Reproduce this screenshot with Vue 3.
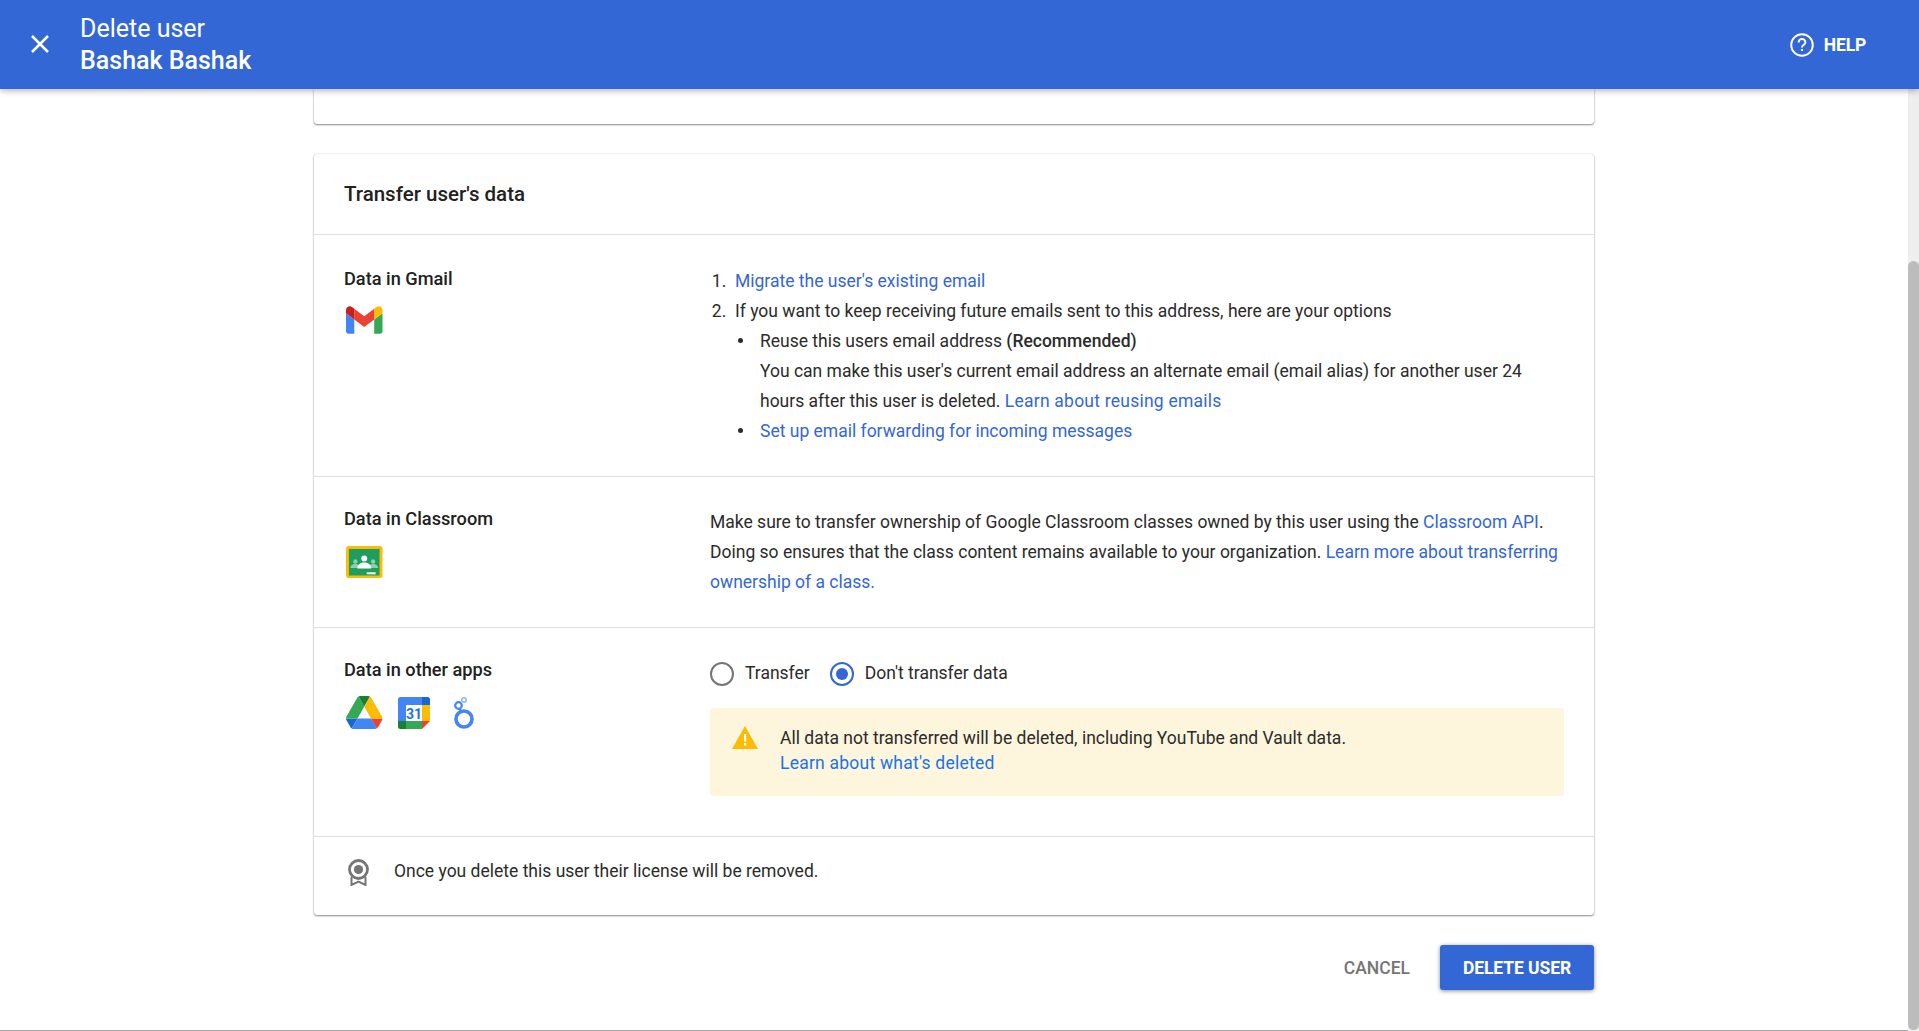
<script setup>
const title = 'Delete user'
const userName = 'Bashak Bashak'
</script>

<template>
  <div class="page">
    <header class="topbar">
      <div class="topbar-left">
        <svg class="close" viewBox="0 0 18 18" width="18" height="18" fill="none" stroke="#fff" stroke-width="2.5">
          <path d="M1 1l16 16M17 1L1 17" />
        </svg>
        <div class="titles">
          <div class="title">{{ title }}</div>
          <div class="title strong">{{ userName }}</div>
        </div>
      </div>
      <div class="help">
        <svg viewBox="0 0 24 24" width="24" height="24" fill="none">
          <circle cx="12" cy="12" r="10.8" stroke="#fff" stroke-width="1.9" />
          <path d="M8.6 9.4a3.4 3.4 0 0 1 6.8 0c0 2.2-3.4 2.5-3.4 5" stroke="#fff" stroke-width="1.9" />
          <rect x="11" y="16" width="2" height="2" fill="#fff" />
        </svg>
        <span>HELP</span>
      </div>
    </header>

    <div class="content">
      <main class="main">
        <div class="card stub"></div>

        <section class="card">
          <h2 class="card-title">Transfer user's data</h2>

          <div class="row gmail-row">
            <div class="label-col">
              <div class="label">Data in Gmail</div>
              <div class="icons">
                <svg class="gmail" viewBox="52 42 88 66" width="36.5" height="28">
                  <path fill="#4285f4" d="M58 108h14V74L52 59v43c0 3.32 2.69 6 6 6" />
                  <path fill="#34a853" d="M120 108h14c3.32 0 6-2.69 6-6V59l-20 15" />
                  <path fill="#fbbc04" d="M120 48v26l20-15v-8c0-7.42-8.47-11.65-14.4-7.2" />
                  <path fill="#ea4335" d="M72 74V48l24 18 24-18v26L96 92" />
                  <path fill="#c5221f" d="M52 51v8l20 15V48l-5.6-4.2c-5.94-4.45-14.4-.22-14.4 7.2" />
                </svg>
              </div>
            </div>
            <div class="body-col">
              <ol class="steps">
                <li><a>Migrate the user's existing email</a></li>
                <li>
                  If you want to keep receiving future emails sent to this address, here are your options
                  <ul class="options">
                    <li>
                      Reuse this users email address <b>(Recommended)</b><br />
                      You can make this user's current email address an alternate email (email alias) for another user 24 hours after this user is deleted.
                      <a class="wide">Learn about reusing emails</a>
                    </li>
                    <li><a>Set up email forwarding for incoming messages</a></li>
                  </ul>
                </li>
              </ol>
            </div>
          </div>

          <div class="row classroom-row">
            <div class="label-col">
              <div class="label">Data in Classroom</div>
              <div class="icons">
                <svg class="classroom" viewBox="0 0 37 32" width="36.5" height="32" preserveAspectRatio="none">
                  <rect width="37" height="32" rx="2.5" fill="#fbbc04" />
                  <rect x="3" y="3" width="31" height="26.500" fill="#1e9e5e" />
                  <circle cx="9.500" cy="15.500" r="2.200" fill="#8fd0ac" />
                  <circle cx="27.500" cy="15.500" r="2.200" fill="#8fd0ac" />
                  <path d="M4.500 22c0-2.800 2.600-4 5-4s5 1.200 5 4zM22.500 22c0-2.800 2.600-4 5-4s5 1.200 5 4z" fill="#8fd0ac" />
                  <circle cx="18.500" cy="12.500" r="3" fill="#fff" />
                  <path d="M11.500 22.500c0-4 3.600-5.900 7-5.900s7 1.900 7 5.900z" fill="#fff" />
                  <rect x="21" y="26.300" width="9" height="2" fill="#fff" />
                </svg>
              </div>
            </div>
            <div class="body-col">
              <p class="para">
                Make sure to transfer ownership of Google Classroom classes owned by this user using the <a>Classroom API</a>.
                Doing so ensures that the class content remains available to your organization.
                <a>Learn more about transferring ownership of a class.</a>
              </p>
            </div>
          </div>

          <div class="row other-row">
            <div class="label-col">
              <div class="label">Data in other apps</div>
              <div class="icons apps">
                <svg viewBox="0 0 87.3 78" width="36.5" height="33" preserveAspectRatio="none">
                  <path d="m6.6 66.85 3.85 6.65c.8 1.4 1.95 2.5 3.3 3.3l13.75-23.8h-27.5c0 1.55.4 3.1 1.2 4.5z" fill="#1967d2" />
                  <path d="m43.65 25-13.75-23.8c-1.35.8-2.5 1.9-3.3 3.3l-25.4 44a9.06 9.06 0 0 0 -1.2 4.5h27.5z" fill="#34a853" />
                  <path d="m73.55 76.8c1.35-.8 2.5-1.9 3.3-3.3l1.6-2.75 7.65-13.25c.8-1.4 1.2-2.95 1.2-4.5h-27.502l5.852 11.5z" fill="#ea4335" />
                  <path d="m43.65 25 13.75-23.8c-1.35-.8-2.9-1.2-4.5-1.2h-18.5c-1.6 0-3.15.45-4.5 1.2z" fill="#188038" />
                  <path d="m59.8 53h-32.3l-13.75 23.8c1.35.8 2.9 1.2 4.5 1.2h50.8c1.6 0 3.15-.45 4.5-1.2z" fill="#4285f4" />
                  <path d="m73.4 26.5-12.7-22c-.8-1.4-1.95-2.5-3.3-3.3l-13.75 23.8 16.15 28h27.45c0-1.55-.4-3.1-1.2-4.5z" fill="#fbbc04" />
                </svg>
                <svg class="calendar" viewBox="0 0 32 32" width="32" height="32">
                  <path d="M2.5 0H24v8H8v16H0V2.500A2.500 2.500 0 0 1 2.500 0z" fill="#4285f4" />
                  <path d="M24 0h5.500A2.500 2.500 0 0 1 32 2.500V8h-8z" fill="#1967d2" />
                  <rect x="24" y="8" width="8" height="16" fill="#fbbc04" />
                  <rect x="8" y="24" width="16" height="8" fill="#34a853" />
                  <path d="M0 24h8v8H2.500A2.500 2.500 0 0 1 0 29.500z" fill="#188038" />
                  <path d="M24 24h8l-8 8z" fill="#ea4335" />
                  <text class="cal-num" x="16" y="21.500" text-anchor="middle">31</text>
                </svg>
                <svg class="looker" viewBox="0 0 20 32" width="20" height="32" fill="none">
                  <circle cx="10" cy="22" r="8" stroke="#4285f4" stroke-width="3.600" />
                  <circle cx="4.500" cy="8.500" r="3.300" stroke="#4285f4" stroke-width="2.200" />
                  <path d="M5.500 11.500L7 14.500" stroke="#4285f4" stroke-width="2.400" />
                  <circle cx="10" cy="3" r="2.200" stroke="#8ab4f8" stroke-width="1.500" />
                </svg>
              </div>
            </div>
            <div class="body-col">
              <div class="radios">
                <label class="radio"><span class="dot"></span><span class="radio-text">Transfer</span></label>
                <label class="radio"><span class="dot on"></span><span class="radio-text">Don't transfer data</span></label>
              </div>
              <div class="warning">
                <svg class="warn-icon" viewBox="0 0 26 23" width="26" height="23">
                  <path d="M13 0l13 23H0z" fill="#fbbc04" />
                  <rect x="12" y="8" width="2.200" height="7.500" fill="#fff" />
                  <rect x="12" y="17" width="2.200" height="2.500" fill="#fff" />
                </svg>
                <div class="warn-text">
                  <div>All data not transferred will be deleted, including YouTube and Vault data.</div>
                  <a class="bright wide">Learn about what's deleted</a>
                </div>
              </div>
            </div>
          </div>

          <div class="license">
            <svg viewBox="0 0 21 27" width="21" height="27" fill="none">
              <circle cx="10.500" cy="10.500" r="9" stroke="#757575" stroke-width="2.800" />
              <circle cx="10.500" cy="10.500" r="4.600" fill="#757575" />
              <path d="M3.500 18v8l7-3.500 7 3.500v-8" stroke="#757575" stroke-width="2" />
            </svg>
            <span>Once you delete this user their license will be removed.</span>
          </div>
        </section>

        <div class="actions">
          <span class="cancel">CANCEL</span>
          <span class="delete">DELETE USER</span>
        </div>
      </main>

      <div class="scrollbar"><div class="thumb"></div></div>
    </div>
  </div>
</template>

<style scoped>
.page {
  height: 1031px;
  display: flex;
  flex-direction: column;
  overflow: hidden;
  font-family: Roboto, "Liberation Sans", sans-serif;
  font-size: 17.5px;
  line-height: 30px;
  color: #2b2b2b;
  background: #fff;
}
.topbar {
  height: 89px;
  flex: none;
  background: #3367d6;
  color: #fff;
  display: flex;
  align-items: center;
  justify-content: space-between;
  padding: 0 53px 0 31px;
  box-sizing: border-box;
  box-shadow: 0 2px 6px rgba(0, 0, 0, 0.28);
  position: relative;
  z-index: 2;
}
.topbar-left {
  display: flex;
  align-items: center;
  gap: 31px;
}
.close {
  display: block;
  margin-top: -1px;
}
.title {
  font-size: 25px;
  line-height: 32px;
}
.title.strong {
  font-weight: 500;
}
.help {
  display: flex;
  align-items: center;
  gap: 10px;
  font-size: 17.5px;
  font-weight: 700;
  letter-spacing: -0.2px;
}
.help svg {
  display: block;
}
.content {
  flex: 1;
  min-height: 0;
  display: flex;
}
.main {
  flex: 1;
  min-width: 0;
  display: flex;
  flex-direction: column;
  align-items: center;
  border-bottom: 1px solid #a8a8ac;
}
.card {
  width: 1280px;
  background: #fff;
  border-radius: 3px;
  box-shadow: 0 1px 2px rgba(0, 0, 0, 0.45), 0 0 1px rgba(0, 0, 0, 0.3);
  flex: none;
  margin-bottom: 30px;
}
.stub {
  height: 35px;
  border-radius: 0 0 3px 3px;
}
.card-title {
  margin: 0;
  height: 80px;
  padding-left: 30px;
  font-size: 20.5px;
  font-weight: 500;
  line-height: 80px;
  color: #212121;
}
.row {
  display: flex;
  border-top: 1px solid #e0e0e0;
  padding: 30px 30px 0;
  box-sizing: border-box;
}
.gmail-row {
  height: 242px;
}
.classroom-row {
  height: 151px;
}
.other-row {
  height: 209px;
}
.label-col {
  width: 366px;
  flex: none;
}
.label {
  font-size: 18.2px;
  font-weight: 500;
  line-height: 24px;
  color: #212121;
}
.gmail-row .label {
  margin-top: 2px;
}
.icons {
  margin-top: 15px;
  display: flex;
  align-items: flex-start;
  gap: 16px;
}
.icons.apps {
  margin-top: 14px;
}
.icons svg {
  display: block;
}
.icons svg:first-child {
  margin-left: 2px;
}
.calendar {
  margin: 1px 0 0 -0.5px;
  background: linear-gradient(#fff, #fff) no-repeat 8px 8px / 16px 16px;
}
.looker {
  margin: 1px 0 0 8px;
}
.cal-num {
  font-family: Roboto, sans-serif;
  font-weight: 700;
  font-size: 14px;
  fill: #1a73e8;
}
.body-col {
  flex: 1;
  min-width: 0;
}
a {
  color: #3367d6;
  text-decoration: none;
}
a.bright {
  color: #1a73e8;
}
a.wide {
  letter-spacing: 0.23px;
}
.gmail-row .body-col {
  padding-top: 1px;
}
.steps {
  margin: 0;
  padding: 0 0 0 25px;
}
.steps > li::marker {
  content: counter(list-item) ".  ";
}
.options {
  margin: 0;
  padding: 0 0 0 25px;
  list-style: none;
}
.options > li {
  position: relative;
}
.options > li::before {
  content: "";
  position: absolute;
  left: -22px;
  top: 12px;
  width: 5px;
  height: 5px;
  border-radius: 50%;
  background: #2b2b2b;
}
.options b {
  font-weight: 500;
}
.para {
  margin: 0;
}
.radios {
  display: flex;
  align-items: center;
  gap: 20px;
  height: 32px;
}
.radio {
  display: flex;
  align-items: center;
  gap: 11px;
}
.radio-text {
  margin-top: -2px;
}
.dot {
  width: 24px;
  height: 24px;
  box-sizing: border-box;
  border: 2px solid #757575;
  border-radius: 50%;
  position: relative;
}
.dot.on {
  border-color: #3367d6;
}
.dot.on::after {
  content: "";
  position: absolute;
  left: 4px;
  top: 4px;
  width: 12px;
  height: 12px;
  border-radius: 50%;
  background: #3367d6;
}
.warning {
  margin-top: 18px;
  height: 88px;
  box-sizing: border-box;
  background: #fdf6dd;
  border-radius: 3px;
  padding: 18px 0 0 22px;
  display: flex;
  align-items: flex-start;
  gap: 22px;
  line-height: 24.5px;
}
.warn-icon {
  display: block;
  flex: none;
}
.license {
  border-top: 1px solid #e0e0e0;
  height: 79px;
  box-sizing: border-box;
  padding: 22px 0 0 34px;
  display: flex;
  align-items: flex-start;
  gap: 25px;
  line-height: 24px;
}
.license svg {
  display: block;
}
.actions {
  width: 1280px;
  display: flex;
  justify-content: flex-end;
  align-items: center;
  gap: 30px;
  flex: none;
}
.cancel {
  color: #757575;
  font-weight: 500;
}
.delete {
  width: 154px;
  height: 45px;
  display: flex;
  align-items: center;
  justify-content: center;
  background: #3367d6;
  color: #fff;
  font-weight: 700;
  letter-spacing: -0.1px;
  border-radius: 3px;
  box-shadow: 0 1px 4px rgba(0, 0, 0, 0.45);
}
.scrollbar {
  width: 11px;
  flex: none;
  background: #eeeeee;
  padding-top: 172px;
  box-sizing: border-box;
}
.thumb {
  height: 769px;
  background: #bcbcbc;
  border-radius: 6px;
}
</style>
